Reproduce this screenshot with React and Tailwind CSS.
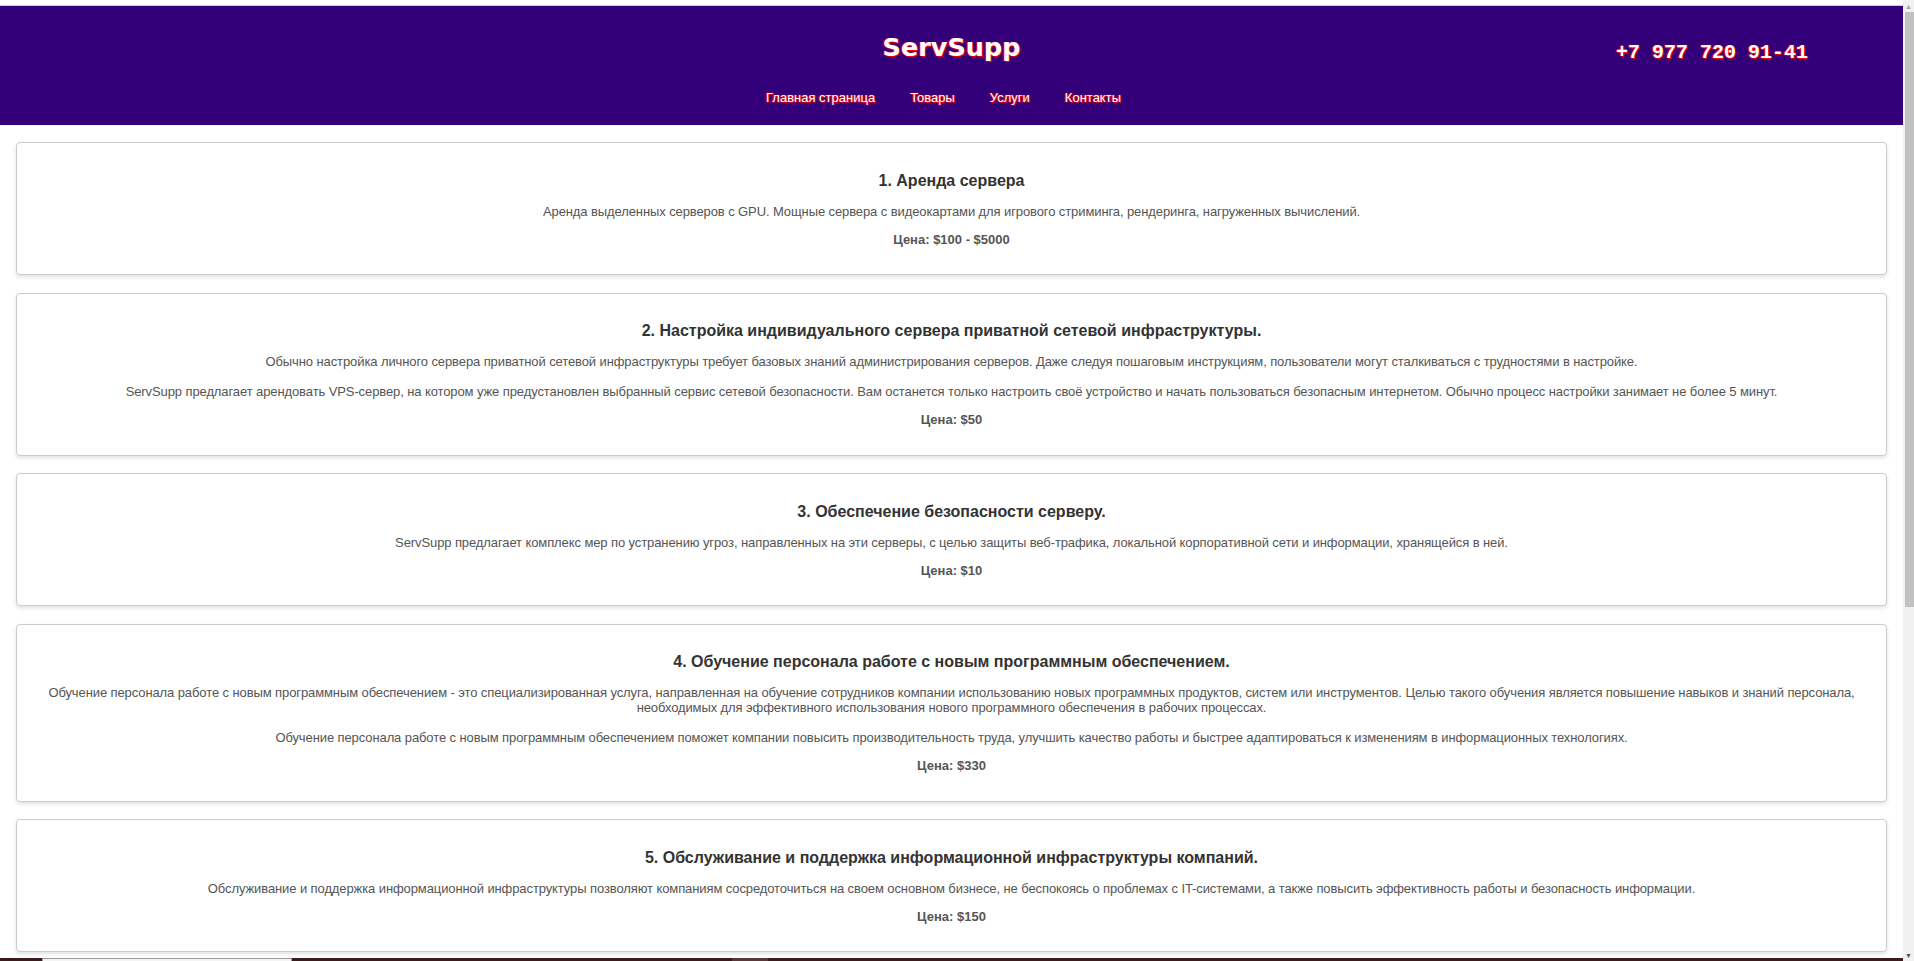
import React from 'react';

const services = [
  {
    title: "1. Аренда сервера",
    text: [
      "Аренда выделенных серверов с GPU. Мощные сервера с видеокартами для игрового стриминга, рендеринга, нагруженных вычислений.",
    ],
    price: "Цена: $100 - $5000",
  },
  {
    title: "2. Настройка индивидуального сервера приватной сетевой инфраструктуры.",
    text: [
      "Обычно настройка личного сервера приватной сетевой инфраструктуры требует базовых знаний администрирования серверов. Даже следуя пошаговым инструкциям, пользователи могут сталкиваться с трудностями в настройке.",
      "ServSupp предлагает арендовать VPS-сервер, на котором уже предустановлен выбранный сервис сетевой безопасности. Вам останется только настроить своё устройство и начать пользоваться безопасным интернетом. Обычно процесс настройки занимает не более 5 минут.",
    ],
    price: "Цена: $50",
  },
  {
    title: "3. Обеспечение безопасности серверу.",
    text: [
      "ServSupp предлагает комплекс мер по устранению угроз, направленных на эти серверы, с целью защиты веб-трафика, локальной корпоративной сети и информации, хранящейся в ней.",
    ],
    price: "Цена: $10",
  },
  {
    title: "4. Обучение персонала работе с новым программным обеспечением.",
    text: [
      "Обучение персонала работе с новым программным обеспечением - это специализированная услуга, направленная на обучение сотрудников компании использованию новых программных продуктов, систем или инструментов. Целью такого обучения является повышение навыков и знаний персонала, необходимых для эффективного использования нового программного обеспечения в рабочих процессах.",
      "Обучение персонала работе с новым программным обеспечением поможет компании повысить производительность труда, улучшить качество работы и быстрее адаптироваться к изменениям в информационных технологиях.",
    ],
    price: "Цена: $330",
  },
  {
    title: "5. Обслуживание и поддержка информационной инфраструктуры компаний.",
    text: [
      "Обслуживание и поддержка информационной инфраструктуры позволяют компаниям сосредоточиться на своем основном бизнесе, не беспокоясь о проблемах с IT-системами, а также повысить эффективность работы и безопасность информации.",
    ],
    price: "Цена: $150",
  },
];

const navLinks = ["Главная страница", "Товары", "Услуги", "Контакты"];

const glow = "[text-shadow:1px_1px_1px_#ff0000,-1px_0_1px_#ff0000]";

const App = () => {
  return (
    <div className="flex h-screen overflow-hidden bg-white font-['Liberation_Sans',Arial,sans-serif]">
      <div className="min-w-0 flex-1 pt-[5px]">
        <header className="grid h-[120px] grid-cols-[1fr_auto_1fr] border-t border-[#d0d0d0] bg-[#33007a]">
          <div />
          <div className="flex flex-col items-center">
            <h1 className={`mt-[26px] font-['DejaVu_Sans',Verdana,sans-serif] text-[25.5px] font-bold leading-[31px] text-white ${glow}`}>
              ServSupp
            </h1>
            <nav className="mt-[27px] flex gap-[35px] pr-[16px]">
              {navLinks.map((link) => (
                <a key={link} href="#" className={`text-[13px] leading-[15px] text-white ${glow}`}>
                  {link}
                </a>
              ))}
            </nav>
          </div>
          <div className="flex justify-end pr-[95px] pt-[35px]">
            <span className={`font-['Liberation_Mono','Courier_New',monospace] text-[20px] font-bold leading-[23px] text-white ${glow}`}>
              +7 977 720 91-41
            </span>
          </div>
        </header>

        <main className="flex flex-col gap-[17.5px] px-4 pb-[6px] pt-[17px]">
          {services.map((srv) => (
            <section
              key={srv.title}
              className="flex flex-col gap-[13px] rounded-[4px] border border-[#cccccc] bg-white px-5 py-[27.5px] text-center shadow-[0_2px_4px_rgba(0,0,0,0.12)]"
            >
              <h3 className="text-[16px] font-bold leading-[20px] text-[#333333]">{srv.title}</h3>
              <div className="flex flex-col gap-[15px]">
                {srv.text.map((t, i) => (
                  <p key={i} className="text-[13px] leading-[15px] tracking-[-0.1px] text-[#555555]">
                    {t}
                  </p>
                ))}
              </div>
              <p className="text-[13px] font-bold leading-[15px] text-[#555555]">{srv.price}</p>
            </section>
          ))}
        </main>

        <footer className="flex h-[160px] gap-[440px] bg-[#3b1c1c] pl-[42px]">
          <div className="h-[120px] w-[250px] border border-[#999999] bg-[#f3f3f3]" />
          <div className="h-[40px] w-[36px] bg-[#5a3838]" />
        </footer>
      </div>

      {/* page scrollbar */}
      <aside className="flex w-[11px] flex-col bg-[#f1f1f1]">
        <div className="flex h-[12px] items-center justify-center text-[7px] leading-none text-[#a3a3a3]">▲</div>
        <div className="ml-[2px] h-[595px] bg-[#c1c1c1]" />
        <div className="flex-1" />
        <div className="flex h-[12px] items-center justify-center text-[7px] leading-none text-[#505050]">▼</div>
      </aside>
    </div>
  );
};

export default App;
